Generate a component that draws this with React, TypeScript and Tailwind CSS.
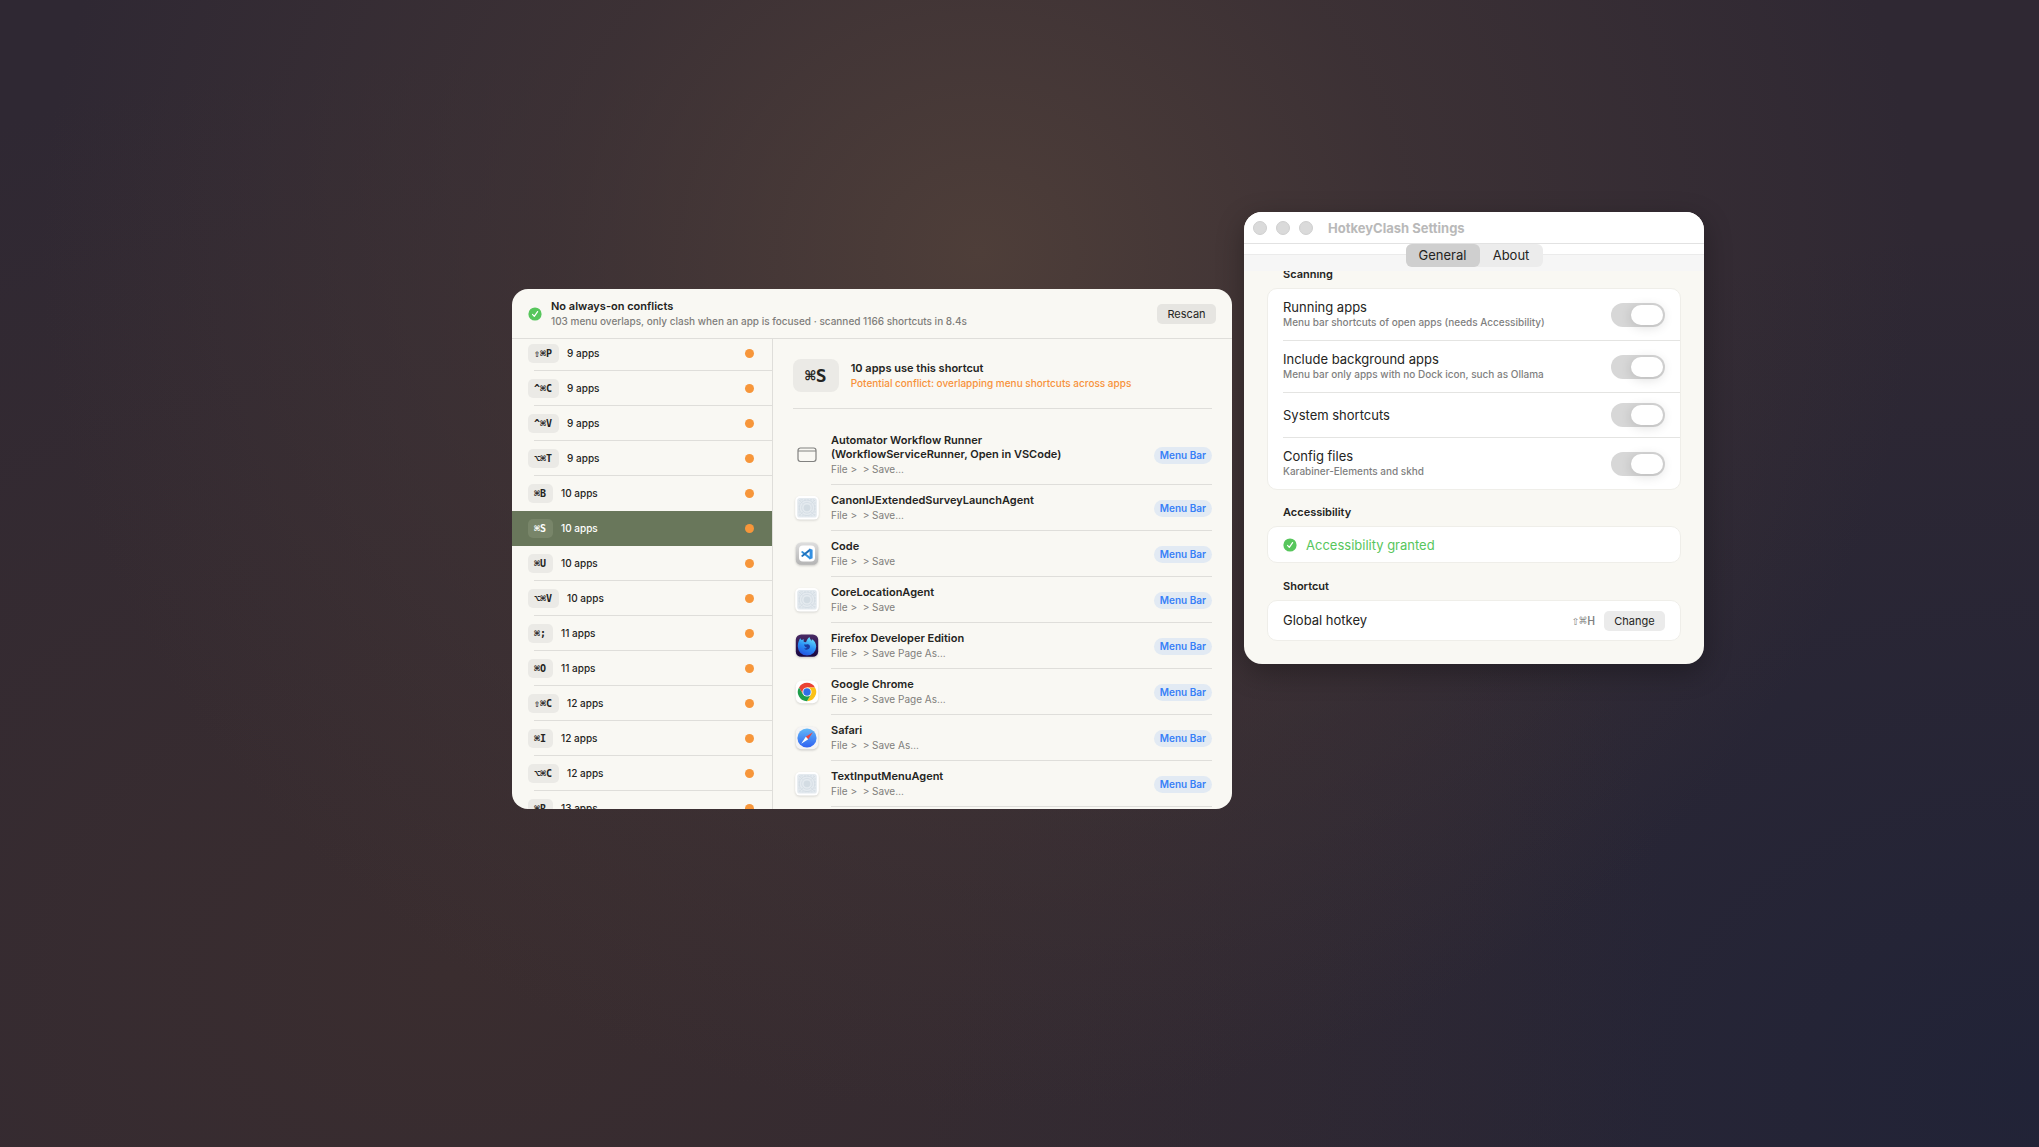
import React from "react";

type Shortcut = {
  keys: string;
  apps: number;
};

type AppEntry = {
  name: string;
  path: string;
  icon: React.ReactNode;
};

type Setting = {
  id: string;
  label: string;
  hint?: string;
};

const shortcuts: Shortcut[] = [
  { keys: "⇧⌘P", apps: 9 },
  { keys: "^⌘C", apps: 9 },
  { keys: "^⌘V", apps: 9 },
  { keys: "⌥⌘T", apps: 9 },
  { keys: "⌘B", apps: 10 },
  { keys: "⌘S", apps: 10 },
  { keys: "⌘U", apps: 10 },
  { keys: "⌥⌘V", apps: 10 },
  { keys: "⌘;", apps: 11 },
  { keys: "⌘O", apps: 11 },
  { keys: "⇧⌘C", apps: 12 },
  { keys: "⌘I", apps: 12 },
  { keys: "⌥⌘C", apps: 12 },
  { keys: "⌘R", apps: 13 },
];

const settings: Setting[] = [
  {
    id: "running",
    label: "Running apps",
    hint: "Menu bar shortcuts of open apps (needs Accessibility)",
  },
  {
    id: "background",
    label: "Include background apps",
    hint: "Menu bar only apps with no Dock icon, such as Ollama",
  },
  { id: "system", label: "System shortcuts" },
  { id: "config", label: "Config files", hint: "Karabiner-Elements and skhd" },
];

const CheckBadge = () => (
  <svg viewBox="0 0 14 14" className="size-[14px] shrink-0" aria-hidden="true">
    <circle cx="7" cy="7" r="6.6" fill="#57c65c" />
    <path
      d="M4.5 7.4 6.3 9.4 9.6 4.6"
      fill="none"
      stroke="#fff"
      strokeWidth="1.2"
      strokeLinecap="round"
      strokeLinejoin="round"
    />
  </svg>
);

const WindowIcon = () => (
  <svg viewBox="0 0 28 28" className="size-7" fill="none" stroke="#828280" aria-hidden="true">
    <rect x="5" y="7" width="18" height="13.5" rx="2.4" strokeWidth="1.2" />
    <path d="M5 10h18" strokeWidth="1.2" />
  </svg>
);

const GenericIcon = () => (
  <svg
    viewBox="0 0 28 28"
    className="size-7 drop-shadow-[0_1px_1px_rgba(0,0,0,0.14)]"
    aria-hidden="true"
  >
    <rect x="2.2" y="2" width="23.6" height="23.6" rx="5" fill="#fff" />
    <rect x="4.2" y="4" width="19.6" height="19.6" rx="2.6" fill="#e4eaef" />
    <g fill="none" stroke="#d3dce3" strokeWidth="0.8">
      <rect x="6" y="5.8" width="16" height="16" rx="2" strokeDasharray="2 1" />
      <circle cx="14" cy="13.8" r="7.8" />
      <circle cx="14" cy="13.8" r="5.4" />
      <path d="M6 5.8l4 4M22 5.8l-4 4M6 21.8l4-4M22 21.8l-4-4" />
    </g>
    <circle cx="14" cy="13.8" r="3.4" fill="#d3dce3" />
  </svg>
);

const CodeIcon = () => (
  <svg
    viewBox="0 0 28 28"
    className="size-7 drop-shadow-[0_1px_1px_rgba(0,0,0,0.2)]"
    aria-hidden="true"
  >
    <defs>
      <linearGradient id="codeFrame" x1="0" y1="0" x2="0" y2="1">
        <stop offset="0" stopColor="#dedede" />
        <stop offset="1" stopColor="#b4b4b4" />
      </linearGradient>
    </defs>
    <rect x="2.8" y="2.4" width="22.4" height="22.4" rx="5.4" fill="url(#codeFrame)" />
    <rect x="6" y="5.6" width="16" height="16" rx="4" fill="#fff" />
    <path d="M8.4 11.6 9.4 10.9 17 16.8V19.4L8.4 12.4z" fill="#2f8fdc" />
    <path d="M8.4 16.2 9.4 17 17 11.2V8.6L8.4 15.4z" fill="#1f6fb8" />
    <path d="M16.6 8.4 19.6 9.8V18.2L16.6 19.6z" fill="#3490e2" />
  </svg>
);

const FirefoxIcon = () => (
  <svg
    viewBox="0 0 28 28"
    className="size-7 drop-shadow-[0_1px_1px_rgba(0,0,0,0.2)]"
    aria-hidden="true"
  >
    <defs>
      <linearGradient id="foxBack" x1="0" y1="0" x2="0" y2="1">
        <stop offset="0" stopColor="#4a2b64" />
        <stop offset="1" stopColor="#180540" />
      </linearGradient>
      <linearGradient id="foxBody" x1="0.7" y1="0" x2="0.3" y2="1">
        <stop offset="0" stopColor="#6ce3fb" />
        <stop offset="0.5" stopColor="#2b93f5" />
        <stop offset="1" stopColor="#2250e0" />
      </linearGradient>
    </defs>
    <rect x="2.8" y="2.4" width="22.4" height="22.4" rx="5.4" fill="url(#foxBack)" />
    <path
      d="M6.2 8.2C6.4 7.4 7 6.6 7.4 6.2 7.5 7 8 7.6 8.6 8 9.2 7.5 10.4 7.2 11.2 7.6 10.6 8.2 10.4 9 10.8 9.8L13 10.2C13.6 8.6 14.6 6.4 16.4 5 16.6 6.6 17.8 7.6 18.8 8.8 19 8.2 19 7.6 18.8 7 21.6 8.8 23.2 11.6 23.2 14.6A9.2 9 0 0 1 4.8 14.6C4.8 12.2 5.2 10 6.2 8.2z"
      fill="url(#foxBody)"
    />
    <path
      d="M11 12.4C12 12.4 12.8 12.8 13.6 12.4 15.6 11.8 17.2 13.2 17 15A3.4 3.4 0 0 1 11 16.4C12.2 16.8 13.4 16.4 14 15.6 12.6 15.4 11.4 14.2 11 12.4z"
      fill="#1b3ba0"
    />
  </svg>
);

const ChromeIcon = () => (
  <svg
    viewBox="0 0 28 28"
    className="size-7 drop-shadow-[0_1px_1px_rgba(0,0,0,0.14)]"
    aria-hidden="true"
  >
    <rect x="2.8" y="2.8" width="22.4" height="22.4" rx="5.4" fill="#fff" />
    <path d="M6.03 9.4A9.2 9.2 0 0 1 21.97 9.4H14L10 16.3z" fill="#ea4335" />
    <path d="M21.97 9.4A9.2 9.2 0 0 1 14 23.2L18 16.3 14 9.4z" fill="#fbc116" />
    <path d="M14 23.2A9.2 9.2 0 0 1 6.03 9.4L10 16.3 18 16.3z" fill="#1e9e4a" />
    <circle cx="14" cy="14" r="4.6" fill="#fff" />
    <circle cx="14" cy="14" r="3.7" fill="#2f6fe6" />
  </svg>
);

const SafariIcon = () => (
  <svg
    viewBox="0 0 28 28"
    className="size-7 drop-shadow-[0_1px_1px_rgba(0,0,0,0.2)]"
    aria-hidden="true"
  >
    <defs>
      <linearGradient id="safariDial" x1="0" y1="0" x2="0" y2="1">
        <stop offset="0" stopColor="#62b8f7" />
        <stop offset="1" stopColor="#2f62f2" />
      </linearGradient>
    </defs>
    <rect x="2.8" y="2.8" width="22.4" height="22.4" rx="5.4" fill="#f4f4f5" />
    <circle cx="14" cy="14" r="9.6" fill="url(#safariDial)" />
    <path d="M19.8 8.2 15.2 15.2 12.8 12.8z" fill="#f0443c" />
    <path d="M8.2 19.8 12.8 12.8 15.2 15.2z" fill="#fff" />
  </svg>
);

const entries: AppEntry[] = [
  {
    name: "Automator Workflow Runner (WorkflowServiceRunner, Open in VSCode)",
    path: "File >  > Save…",
    icon: <WindowIcon />,
  },
  { name: "CanonIJExtendedSurveyLaunchAgent", path: "File >  > Save…", icon: <GenericIcon /> },
  { name: "Code", path: "File >  > Save", icon: <CodeIcon /> },
  { name: "CoreLocationAgent", path: "File >  > Save", icon: <GenericIcon /> },
  { name: "Firefox Developer Edition", path: "File >  > Save Page As…", icon: <FirefoxIcon /> },
  { name: "Google Chrome", path: "File >  > Save Page As…", icon: <ChromeIcon /> },
  { name: "Safari", path: "File >  > Save As…", icon: <SafariIcon /> },
  { name: "TextInputMenuAgent", path: "File >  > Save…", icon: <GenericIcon /> },
];

const ShortcutList = ({
  selected,
  onSelect,
}: {
  selected: string;
  onSelect: (keys: string) => void;
}) => {
  const selectedIdx = shortcuts.findIndex((s) => s.keys === selected);
  return (
    <nav className="w-[261px] shrink-0 overflow-hidden border-r border-[#dfdeda]">
      <ul className="-mt-[3px]">
        {shortcuts.map((shortcut, idx) => {
          const active = idx === selectedIdx;
          const divided = !active && idx !== selectedIdx - 1;
          return (
            <li key={shortcut.keys} className={active ? "bg-[#69775b]" : ""}>
              <button
                type="button"
                onClick={() => onSelect(shortcut.keys)}
                className={`flex h-[34px] w-full items-center pr-[18px] pl-4 text-[10px] leading-4 ${
                  active ? "text-white" : "text-[#242422]"
                }`}
              >
                <span
                  className={`rounded-[5px] py-[2px] pr-[7px] pl-[6px] font-['DejaVu_Sans_Mono',monospace] leading-[15px] font-bold ${
                    active ? "bg-[#788569]" : "bg-[#ebeae6]"
                  }`}
                >
                  {shortcut.keys}
                </span>
                <span className="ml-2 font-medium">{shortcut.apps} apps</span>
                <span className="ml-auto size-[9px] rounded-full bg-[#f7963a]" />
              </button>
              <div className={`ml-[22px] h-px ${divided ? "bg-[#dfdeda]" : ""}`} />
            </li>
          );
        })}
      </ul>
    </nav>
  );
};

const ShortcutDetail = ({ selected }: { selected: string }) => (
  <section className="min-w-0 flex-1 overflow-hidden px-5">
    <div className="flex items-center gap-3 border-b border-[#dfdeda] pt-5 pb-4">
      <span className="rounded-lg bg-[#ebeae6] px-3 py-1 font-['DejaVu_Sans_Mono',monospace] text-[18px] leading-[25px] font-bold">
        {selected}
      </span>
      <div className="pb-[2px]">
        <h2 className="text-[11px] leading-4 font-semibold">10 apps use this shortcut</h2>
        <p className="text-[10px] leading-[14px] font-medium text-[#f7923a]">
          Potential conflict: overlapping menu shortcuts across apps
        </p>
      </div>
    </div>
    <ul className="pt-4">
      {entries.map((entry) => (
        <li key={entry.name} className="flex items-center gap-[10px]">
          <span className="size-7 shrink-0">{entry.icon}</span>
          <div className="flex flex-1 items-center justify-between border-b border-[#dfdeda] pt-2 pb-[7px]">
            <div className="max-w-[260px]">
              <h3 className="text-[11px] leading-[14px] font-semibold">{entry.name}</h3>
              <p className="text-[10px] leading-4 whitespace-pre text-[#7f7e7b]">{entry.path}</p>
            </div>
            <span className="rounded-full bg-[#e2eaf3] px-[6px] text-[10px] leading-[17px] font-semibold text-[#3880f7]">
              Menu Bar
            </span>
          </div>
        </li>
      ))}
    </ul>
  </section>
);

const ConflictsWindow = () => {
  const [selected, setSelected] = React.useState("⌘S");
  return (
    <main className="absolute top-[289px] left-[512px] z-10 flex h-[520px] w-[720px] flex-col overflow-hidden rounded-2xl bg-[#f9f8f3] text-[#242422]">
      <header className="flex h-[50px] shrink-0 items-center border-b border-[#dfdeda] px-4">
        <CheckBadge />
        <div className="ml-[9px] flex-1 pb-[2px]">
          <h1 className="text-[11px] leading-4 font-semibold">No always-on conflicts</h1>
          <p className="text-[10px] leading-[14px] font-medium text-[#7f7e7b]">
            103 menu overlaps, only clash when an app is focused · scanned 1166 shortcuts in 8.4s
          </p>
        </div>
        <button
          type="button"
          className="h-5 w-[59px] rounded-[5px] bg-[#e6e5e1] text-[11px] leading-5"
        >
          Rescan
        </button>
      </header>
      <div className="flex min-h-0 flex-1">
        <ShortcutList selected={selected} onSelect={setSelected} />
        <ShortcutDetail selected={selected} />
      </div>
    </main>
  );
};

const SettingsWindow = () => (
  <aside className="absolute top-[212px] left-[1244px] flex h-[452px] w-[460px] flex-col overflow-hidden rounded-[18px] bg-[#f9f8f3] text-[#242422] shadow-[0_8px_28px_rgba(0,0,0,0.3)]">
    <div className="flex h-8 shrink-0 items-center gap-[9px] border-b border-[#e2e2e2] bg-white px-[9px]">
      <span className="size-[14px] rounded-full border border-[#cfcfcf] bg-[#dadada]" />
      <span className="size-[14px] rounded-full border border-[#cfcfcf] bg-[#dadada]" />
      <span className="size-[14px] rounded-full border border-[#cfcfcf] bg-[#dadada]" />
      <h1 className="ml-[6px] text-[13px] leading-4 font-bold text-[#b9b9b9]">HotkeyClash Settings</h1>
    </div>
    <div className="flex h-[27px] shrink-0 justify-center bg-[linear-gradient(to_bottom,#fff_10px,#ebebeb_10px,#ebebeb_11px,#f6f6f6_11px)]">
      <div role="tablist" className="flex h-[23px] rounded-md bg-[#ececec] text-[13px] leading-[23px]">
        <button type="button" role="tab" aria-selected="true" className="w-[74px] rounded-md bg-[#cfcfcf]">
          General
        </button>
        <button type="button" role="tab" aria-selected="false" className="w-[63px]">
          About
        </button>
      </div>
    </div>
    <div className="min-h-0 flex-1 overflow-hidden px-[23px]">
      <h2 className="-mt-[5px] mb-[6px] px-4 text-[11px] leading-4 font-semibold">Scanning</h2>
      <div className="divide-y divide-[#e4e4e2] rounded-[10px] border border-[#efeee9] bg-white pl-[15px]">
        {settings.map((setting) => (
          <div key={setting.id} className="flex items-center justify-between py-[10px] pr-[15px]">
            <label htmlFor={setting.id}>
              <span className="block text-[13px] leading-4">{setting.label}</span>
              {setting.hint && (
                <span className="block text-[10px] leading-[15px] font-medium text-[#7f7f7f]">
                  {setting.hint}
                </span>
              )}
            </label>
            <input
              id={setting.id}
              type="checkbox"
              defaultChecked
              className="flex h-6 w-[54px] appearance-none items-center rounded-full bg-[#d7d7d7] px-[2px] before:h-5 before:w-8 before:rounded-full before:bg-white before:shadow-[0_2px_12px_rgba(0,0,0,0.14)] before:content-[''] checked:justify-end"
            />
          </div>
        ))}
      </div>
      <h2 className="mt-[14px] mb-[6px] px-4 text-[11px] leading-4 font-semibold">Accessibility</h2>
      <div className="flex h-[37px] items-center gap-[9px] rounded-[10px] border border-[#efeee9] bg-white px-[15px] text-[13px] leading-4 text-[#57c65c]">
        <CheckBadge />
        Accessibility granted
      </div>
      <h2 className="mt-[15px] mb-[6px] px-4 text-[11px] leading-4 font-semibold">Shortcut</h2>
      <div className="flex h-[41px] items-center rounded-[10px] border border-[#efeee9] bg-white px-[15px] text-[13px]">
        <span className="flex-1">Global hotkey</span>
        <span className="mr-[9px] font-['DejaVu_Sans_Mono',monospace] text-[#7f7f7f]">⇧⌘H</span>
        <button type="button" className="h-5 w-[61px] rounded-[5px] bg-[#ebebeb] text-[11px] leading-5">
          Change
        </button>
      </div>
    </div>
  </aside>
);

const App = () => (
  <div className="relative min-h-screen overflow-hidden bg-[#2f2833] bg-[radial-gradient(ellipse_46%_75%_at_48%_22%,#4e3e39_0%,#45373699_45%,transparent_100%),radial-gradient(ellipse_60%_80%_at_22%_85%,#3a2d2f_0%,transparent_100%),radial-gradient(ellipse_55%_75%_at_100%_95%,#212337_0%,transparent_100%)] font-['Inter',sans-serif]">
    <ConflictsWindow />
    <SettingsWindow />
  </div>
);

export default App;
